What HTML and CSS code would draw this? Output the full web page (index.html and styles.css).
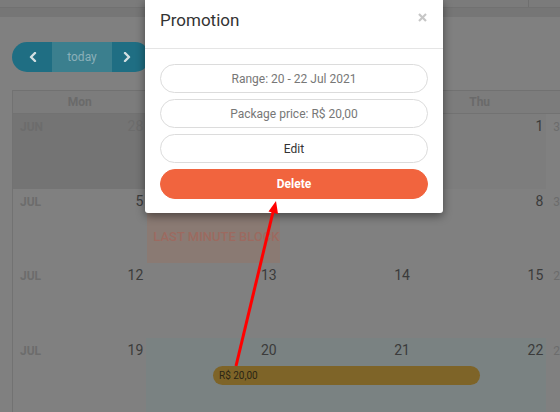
FILE: index.html
```html
<!DOCTYPE html>
<html lang="en">
<head>
<meta charset="utf-8">
<title>Calendar – Promotion</title>
<link rel="stylesheet" href="styles.css">
</head>
<body>
<div class="app">
  <div class="appbar"><div class="appbar-main"></div></div>
  <div class="subbar"></div>

  <div class="toolbar">
    <div class="btn-group">
      <button class="btn btn-nav btn-prev" aria-label="previous">
        <svg width="8" height="10" viewBox="0 0 8 10"><polyline points="6,1 2,5 6,9" /></svg>
      </button>
      <button class="btn btn-today">today</button>
      <button class="btn btn-nav btn-next" aria-label="next">
        <svg width="8" height="10" viewBox="0 0 8 10"><polyline points="2,1 6,5 2,9" /></svg>
      </button>
    </div>
  </div>

  <div class="calendar">
    <div class="cal-head">
      <div class="head-cell">Mon</div>
      <div class="head-cell">Tue</div>
      <div class="head-cell">Wed</div>
      <div class="head-cell">Thu</div>
      <div class="head-cell">Fri</div>
    </div>

    <div class="week">
      <div class="cell cell-past">
        <div class="cell-top"><span class="month">JUN</span><span class="day day-muted">28</span></div>
      </div>
      <div class="cell cell-old">
        <div class="cell-top"><span></span><span class="day">29</span></div>
      </div>
      <div class="cell cell-old">
        <div class="cell-top"><span></span><span class="day">30</span></div>
      </div>
      <div class="cell cell-old">
        <div class="cell-top"><span></span><span class="day">1</span></div>
      </div>
      <div class="cell">
        <div class="cell-top"><span class="extra">33</span><span class="day">2</span></div>
      </div>
    </div>

    <div class="week">
      <div class="cell">
        <div class="cell-top"><span class="month">JUL</span><span class="day">5</span></div>
      </div>
      <div class="cell">
        <div class="cell-top"><span></span><span class="day">6</span></div>
        <div class="bg-event">LAST MINUTE BLOCK</div>
      </div>
      <div class="cell">
        <div class="cell-top"><span></span><span class="day">7</span></div>
      </div>
      <div class="cell">
        <div class="cell-top"><span></span><span class="day">8</span></div>
      </div>
      <div class="cell">
        <div class="cell-top"><span class="extra">33</span><span class="day">9</span></div>
      </div>
    </div>

    <div class="week">
      <div class="cell">
        <div class="cell-top"><span class="month">JUL</span><span class="day">12</span></div>
      </div>
      <div class="cell">
        <div class="cell-top"><span></span><span class="day">13</span></div>
      </div>
      <div class="cell">
        <div class="cell-top"><span></span><span class="day">14</span></div>
      </div>
      <div class="cell">
        <div class="cell-top"><span></span><span class="day">15</span></div>
      </div>
      <div class="cell">
        <div class="cell-top"><span class="extra">20</span><span class="day">16</span></div>
      </div>
    </div>

    <div class="week">
      <div class="cell c1">
        <div class="cell-top"><span class="month">JUL</span><span class="day">19</span></div>
      </div>
      <div class="cell c2 cell-range">
        <div class="cell-top"><span></span><span class="day">20</span></div>
      </div>
      <div class="cell c3 cell-range">
        <div class="cell-top"><span></span><span class="day">21</span></div>
      </div>
      <div class="cell c4 cell-range">
        <div class="cell-top"><span></span><span class="day">22</span></div>
      </div>
      <div class="cell c5">
        <div class="cell-top"><span class="extra">20</span><span class="day">23</span></div>
      </div>
      <div class="event-bar">R$ 20,00</div>
    </div>
  </div>
</div>

<div class="modal">
  <div class="modal-header">
    <h4 class="modal-title">Promotion</h4>
    <span class="modal-close" aria-label="close">
      <svg width="9" height="9" viewBox="0 0 9 9"><line x1="1" y1="1" x2="8" y2="8"/><line x1="8" y1="1" x2="1" y2="8"/></svg>
    </span>
  </div>
  <div class="modal-body">
    <div class="pill pill-info">Range: 20 - 22 Jul 2021</div>
    <div class="pill pill-info">Package price: R$ 20,00</div>
    <div class="pill pill-action">Edit</div>
    <div class="pill pill-danger">Delete</div>
  </div>
</div>

<svg class="annotation" width="560" height="412" viewBox="0 0 560 412">
  <line x1="236" y1="366" x2="273" y2="212" />
  <polygon points="276,201 278,214 268.5,211.5" />
</svg>
</body>
</html>
```

FILE: styles.css
```css
* { box-sizing: border-box; }

body {
  margin: 0;
  width: 560px;
  height: 412px;
  overflow: hidden;
  position: relative;
  background: #808080;
  font-family: Roboto, "Liberation Sans", Arial, sans-serif;
}

.app { width: 560px; }

.appbar {
  height: 8px;
  background: #7b7b7b;
  border-bottom: 1px solid #717171;
}
.appbar-main {
  width: 529px;
  height: 7px;
  border-right: 1px solid #6f6f6f;
}
.subbar {
  height: 9px;
  background: #767676;
}

.toolbar {
  padding: 25px 0 0 12px;
}
.btn-group {
  display: flex;
  height: 30px;
  width: 138px;
  border-radius: 15px;
  overflow: hidden;
}
.btn {
  border: 0;
  margin: 0;
  padding: 0;
  height: 30px;
  font-family: inherit;
  display: flex;
  align-items: center;
  justify-content: center;
}
.btn-nav { background: #1f6e83; }
.btn-prev { width: 40px; padding-left: 1px; }
.btn-next { width: 38px; padding-right: 10px; padding-left: 2px; }
.btn-nav polyline {
  fill: none;
  stroke: #d3dfe2;
  stroke-width: 2.4;
  stroke-linecap: round;
  stroke-linejoin: round;
}
.btn-today {
  width: 60px;
  background: #3b7f8e;
  color: #8bb0b9;
  font-size: 12px;
}

.calendar {
  margin: 18px 0 0 12px;
  width: 680px;
  border-left: 1px solid #727272;
}
.cal-head {
  display: grid;
  grid-template-columns: repeat(5, 133.333px);
  height: 24px;
  background: #7c7c7c;
  border-top: 1px solid #717171;
  border-bottom: 1px solid #727272;
}
.head-cell {
  display: flex;
  align-items: center;
  justify-content: center;
  font-size: 12px;
  font-weight: 700;
  color: #6a6a6a;
}

.week {
  display: grid;
  grid-template-columns: repeat(5, 133.333px);
  grid-template-rows: 74.667px;
}
.cell {
  grid-row: 1;
  display: flex;
  flex-direction: column;
}
.c1 { grid-column: 1; }
.c2 { grid-column: 2; }
.c3 { grid-column: 3; }
.c4 { grid-column: 4; }
.c5 { grid-column: 5; }

.cell-past { background: #747474; }
.cell-old { background: #7d7d7d; }
.cell-range { background: #7a8282; }

.cell-top {
  height: 22px;
  flex: none;
  display: flex;
  justify-content: space-between;
  align-items: baseline;
  padding: 4px 3px 0 7px;
}
.month {
  font-size: 12px;
  font-weight: 700;
  color: #6c6c6c;
}
.day {
  font-size: 14px;
  color: #3b3b3b;
}
.day-muted { color: #6c6c6c; }
.extra {
  font-size: 12px;
  color: #6c6c6c;
}

.bg-event {
  flex: 1;
  margin-left: 1px;
  display: flex;
  align-items: center;
  padding: 0 0 0 6px;
  white-space: nowrap;
  overflow: hidden;
  background: #8a7a73;
  color: #9c6a60;
  font-size: 13px;
  font-weight: 500;
}

.event-bar {
  grid-column: 2 / 5;
  grid-row: 1;
  align-self: start;
  margin: 28px 66.667px 0 66.667px;
  height: 19px;
  border-radius: 10px;
  background: #7e6428;
  color: #2a2414;
  font-size: 10px;
  display: flex;
  align-items: center;
  padding-left: 6px;
}

.modal {
  position: absolute;
  left: 145px;
  top: 0;
  width: 298px;
  background: #fff;
  border-radius: 0 0 3px 3px;
  box-shadow: 0 3px 10px rgba(0, 0, 0, 0.45);
  z-index: 2;
}
.modal-header {
  height: 49px;
  padding: 10px 15px 0 15px;
  border-bottom: 1px solid #e5e5e5;
  display: flex;
  justify-content: space-between;
  align-items: flex-start;
}
.modal-title {
  margin: 0;
  font-size: 17px;
  font-weight: 400;
  line-height: 20px;
  color: #333;
}
.modal-close {
  margin: 3px 1px 0 0;
  display: flex;
}
.modal-close line {
  stroke: #c6c6c6;
  stroke-width: 2.2;
}
.modal-body {
  padding: 15px 15px 14px 15px;
  display: flex;
  flex-direction: column;
  gap: 6px;
}
.pill {
  height: 29px;
  border: 1px solid #dcdcdc;
  border-radius: 15px;
  display: flex;
  align-items: center;
  justify-content: center;
  font-size: 12px;
}
.pill-info { color: #777; }
.pill-action { color: #333; }
.pill-danger {
  height: 30px;
  border-color: #f1643e;
  background: #f1643e;
  color: #fff;
  font-weight: 700;
}

.annotation {
  position: absolute;
  left: 0;
  top: 0;
  z-index: 3;
  pointer-events: none;
}
.annotation line {
  stroke: #ff0000;
  stroke-width: 3;
}
.annotation polygon { fill: #ff0000; }
```
